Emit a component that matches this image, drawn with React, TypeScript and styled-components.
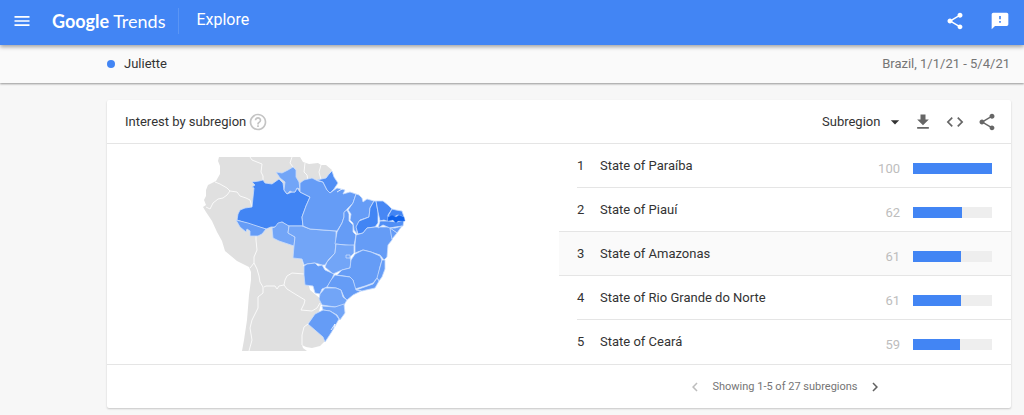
import React from "react";
import styled, { createGlobalStyle } from "styled-components";
import {
  MdArrowDropDown,
  MdChevronLeft,
  MdChevronRight,
  MdCode,
  MdFeedback,
  MdFileDownload,
  MdHelpOutline,
  MdMenu,
  MdShare,
} from "react-icons/md";

const GlobalStyle = createGlobalStyle`
  *, *::before, *::after { box-sizing: border-box; }
  body {
    margin: 0;
    background: #f7f7f7;
    color: #333;
    font-family: Roboto, "Liberation Sans", sans-serif;
    font-size: 13px;
    line-height: 20px;
  }
  button, select { font: inherit; color: inherit; }
`;

const TopBar = styled.header`
  position: relative;
  display: flex;
  align-items: center;
  height: 45px;
  padding: 0 14px 4px 12px;
  background: #4285f4;
  color: #fff;
  box-shadow: 0 2px 4px rgba(0, 0, 0, 0.35);
`;

const IconButton = styled.button<{ $size?: number }>`
  display: flex;
  align-items: center;
  justify-content: center;
  width: 20px;
  height: 20px;
  padding: 0;
  border: 0;
  background: none;
  cursor: pointer;
  svg {
    width: ${(p) => p.$size ?? 20}px;
    height: ${(p) => p.$size ?? 20}px;
    flex: none;
  }
`;

const Logo = styled.a`
  display: flex;
  gap: 4px;
  margin-left: 20px;
  color: #fff;
  font-family: Lato, sans-serif;
  font-size: 18px;
  line-height: 24px;
  text-decoration: none;
`;

const LogoStrong = styled.span`
  font-weight: 700;
`;

const Section = styled.h1`
  margin: 0 auto 0 13px;
  padding: 0 0 2px 17px;
  border-left: 1px solid #5a95f5;
  font-size: 16px;
  font-weight: 400;
  line-height: 24px;
`;

const TopActions = styled.div`
  display: flex;
  gap: 25px;
`;

const TermBar = styled.section`
  display: flex;
  align-items: center;
  justify-content: space-between;
  height: 38px;
  padding: 0 14px 0 107px;
  background: #fafafa;
  box-shadow: 0 1px 2px rgba(0, 0, 0, 0.4);
`;

const Term = styled.span`
  display: flex;
  align-items: center;
  gap: 9px;
  &::before {
    content: "";
    width: 8px;
    height: 8px;
    border-radius: 50%;
    background: #4285f4;
  }
`;

const Period = styled.span`
  color: #757575;
`;

const Card = styled.main`
  margin: 17px 13px 7px 107px;
  border-radius: 2px;
  background: #fff;
  box-shadow: 0 1px 2px rgba(0, 0, 0, 0.2);
`;

const CardHeader = styled.div`
  display: flex;
  align-items: center;
  height: 44px;
  padding: 0 14px 0 18px;
  border-bottom: 1px solid #e5e5e5;
`;

const CardTitle = styled.h2`
  margin: 0 2px 0 0;
  font-size: 13px;
  font-weight: 400;
`;

const HelpButton = styled(IconButton)`
  margin-right: auto;
  color: #c4c4c4;
`;

const SelectWrap = styled.div`
  display: grid;
  align-items: center;
  margin-right: 8px;
  & > * {
    grid-area: 1 / 1;
  }
  svg {
    justify-self: end;
    width: 20px;
    height: 20px;
    pointer-events: none;
  }
`;

const Select = styled.select`
  appearance: none;
  width: 83px;
  padding: 0;
  border: 0;
  background: none;
  outline: none;
`;

const CardActions = styled.div`
  display: flex;
  gap: 12px;
  color: #666;
`;

const CardBody = styled.div`
  display: grid;
  grid-template-columns: 1fr 1fr;
  border-bottom: 1px solid #e5e5e5;
`;

const MapPane = styled.div`
  padding: 11px 0 10px 93px;
`;

const MapDrawing = styled.svg`
  display: block;
  width: 208px;
  height: 199px;
`;

const RegionList = styled.ol`
  margin: 0;
  padding: 0;
  list-style: none;
`;

const RegionRow = styled.li<{ $active?: boolean }>`
  padding-left: ${(p) => (p.$active ? 0 : 18)}px;
  background: ${(p) => (p.$active ? "#fafafa" : "none")};
  box-shadow: ${(p) => (p.$active ? "0 -1px #e5e5e5" : "none")};
  &:not(:last-child) > div {
    border-bottom: 1px solid #e5e5e5;
  }
  & > div {
    padding-left: ${(p) => (p.$active ? 18 : 0)}px;
  }
`;

const RowContent = styled.div`
  display: flex;
  align-items: flex-start;
  height: 44px;
  padding: 12px 19px 0 0;
`;

const Rank = styled.span`
  width: 23px;
`;

const RegionName = styled.span`
  flex: 1;
`;

const Score = styled.span`
  padding-top: 3px;
  color: #bdbdbd;
`;

const Track = styled.span`
  width: 79px;
  height: 11px;
  margin: 7px 0 0 13px;
  background: #eee;
`;

const Fill = styled.span`
  display: block;
  height: 100%;
  background: #4285f4;
`;

const Pager = styled.nav`
  display: flex;
  align-items: center;
  justify-content: center;
  gap: 7px;
  height: 43px;
  margin-left: 50%;
  color: #757575;
  font-size: 11px;
`;

const PageButton = styled(IconButton)`
  color: #616161;
  &:disabled {
    color: #bdbdbd;
  }
`;

const land =
  "219,157 300,157 303,162 309,164 318,163 321,165 326,165 332,170 326,178 318,182 304,190 300,220 302,260 310,290 322,300 318,315 325,341 320,346 312,348 306,347 302,345 303,348 307,351 242,351 244,340 247,320 249,295 251,280 251,272 249,267 237,261 225,251 222,241 217,232 212,221 206,212 203,207 206,205 204,200 206,196 206,190 208,185 212,183 216,181 220,174 220,166 218,161";

const borders = [
  "215,182 220,184 227,188 230,191 237,192 240,196 246,198 250,200 252,207",
  "230,191 227,195 223,198 218,199 213,203 210,209 206,207",
  "250,157 252,160 257,162 262,164 261,172 263,176 263,180",
  "292,157 290,163 293,167",
  "305,163 304,172 307,175 308,181",
  "321,165 319,172 321,180",
  "256,236 256,240 257,250 254,257 254,263 257,269 259,276 260,282 263,287",
  "250,268 254,263",
  "263,287 263,293 258,297 258,308 252,320 250,328 252,340 249,351",
  "264,287 266,286 275,286 277,289 279,286 284,285 285,280 287,276 292,273 304,274",
  "284,285 287,289 295,294 305,300 304,304 301,310 312,311 317,308 320,303",
  "308,324 304,327 302,335 302,345",
  "315,315 308,324",
];

const states = [
  { id: "Amazonas", fill: "#4285f4", points: "252,182 259,181 263,180 265,183 272,184 279,179 283,183 284,190 287,194 292,192 295,192 297,188 300,192 310,197 306,206 302,217 303,226 288,226 282,222 275,227 271,227 266,229 255,226 237,220 238,214 240,210 245,208 252,207 254,188 252,187 255,185" },
  { id: "Acre", fill: "#659cf6", points: "236,220 248,223 266,229 262,234 258,236 250,236 250,231 247,229 246,232 240,227" },
  { id: "Roraima", fill: "#72a5f7", points: "276,172 282,173 288,170 293,167 296,170 296,177 299,182 300,189 297,188 295,192 292,192 290,191 287,194 284,190 285,182 280,178" },
  { id: "Rondônia", fill: "#72a5f7", points: "272,228 275,227 278,223 282,222 289,226 288,233 295,237 294,246 285,243 279,241 273,238" },
  { id: "Mato Grosso", fill: "#72a5f7", points: "289,226 302,226 310,229 336,231 336,242 335,253 329,259 325,265 322,265 315,263 307,264 304,265 302,259 293,258 294,246 295,237 288,233" },
  { id: "Pará", fill: "#659cf6", points: "300,183 304,180 312,178 318,181 323,182 327,190 330,193 337,188 345,190 343,194 350,192 356,194 353,203 348,208 344,213 344,217 342,223 337,231 310,229 303,226 302,217 306,206 310,197 300,192" },
  { id: "Amapá", fill: "#508ef5", points: "317,180 326,178 329,174 332,171 334,177 338,183 334,189 330,193 327,190 323,182" },
  { id: "Maranhão", fill: "#659cf6", points: "356,194 359,195 362,198 363,202 367,199 374,201 370,208 369,217 360,220 357,226 357,234 354,230 353,223 350,220 351,214 348,210 353,203" },
  { id: "Piauí", fill: "#4285f4", points: "374,201 376,201 378,212 378,223 375,227 367,228 363,233 358,234 356,227 359,221 369,217 370,208" },
  { id: "Ceará", fill: "#4787f4", points: "376,201 383,201 388,205 392,209 388,215 388,222 384,220 380,221 378,212" },
  { id: "Tocantins", fill: "#659cf6", points: "347,210 349,214 349,221 353,225 353,232 356,235 354,246 345,245 335,244 337,232 342,223 344,217 344,212" },
  { id: "Bahia", fill: "#659cf6", points: "356,235 363,233 367,228 375,227 380,227 390,227 393,234 392,240 388,245 387,257 384,260 380,255 371,252 363,250 355,253 355,244" },
  { id: "Rio Grande do Norte", fill: "#4285f4", points: "392,209 396,210 402,211 404,217 398,215 394,217 388,216" },
  { id: "Pernambuco", fill: "#508ef5", points: "380,221 388,221 397,222 404,220 403,226 395,227 390,228 383,225 378,228" },
  { id: "Alagoas", fill: "#659cf6", points: "390,228 395,228 402,226 397,233 394,231" },
  { id: "Sergipe", fill: "#659cf6", points: "390,228 397,233 392,239 391,234" },
  { id: "Goiás", fill: "#72a5f7", points: "336,244 345,245 354,245 354,253 350,257 351,263 350,268 342,270 333,274 325,267 327,262 335,253" },
  { id: "Distrito Federal", fill: "#72a5f7", points: "346,255 350,255 350,258 346,258" },
  { id: "Mato Grosso do Sul", fill: "#659cf6", points: "304,266 307,264 315,263 318,266 322,265 325,270 334,274 331,281 327,287 322,289 320,294 315,293 313,286 305,285 304,275" },
  { id: "Minas Gerais", fill: "#659cf6", points: "355,254 363,250 371,252 380,256 382,260 380,267 378,277 373,283 365,286 355,289 353,280 350,277 337,275 342,270 350,268 351,260" },
  { id: "Espírito Santo", fill: "#659cf6", points: "382,260 385,260 385,269 382,277 379,281 377,278 380,267" },
  { id: "Rio de Janeiro", fill: "#659cf6", points: "356,290 373,284 377,278 379,281 375,288 366,290 362,291" },
  { id: "São Paulo", fill: "#659cf6", points: "335,275 350,277 353,280 356,290 361,291 353,295 347,300 344,297 341,290 336,288 327,287 331,280" },
  { id: "Paraná", fill: "#72a5f7", points: "325,288 336,288 341,290 343,297 347,300 344,305 335,307 322,305 319,299 320,294" },
  { id: "Santa Catarina", fill: "#72a5f7", points: "322,306 335,307 344,304 345,313 340,320 337,315 330,311 323,310" },
  { id: "Rio Grande do Sul", fill: "#659cf6", points: "315,314 323,310 330,311 336,315 339,319 334,328 331,333 325,342 323,337 308,324" },
];

const paraiba = "388,217 392,215 396,217 399,215 404,217 405,221 398,221 396,223 393,220 388,221";

function BrazilMap() {
  return (
    <MapDrawing viewBox="200 155 208 199" role="img" aria-label="Map of Brazil by state">
      <polygon points={land} fill="#e0e0e0" />
      {borders.map((points) => (
        <polyline key={points} points={points} fill="none" stroke="#fafafa" strokeWidth="1" strokeLinejoin="round" />
      ))}
      <g stroke="#c8dcfc" strokeWidth="0.8" strokeLinejoin="round">
        {states.map((s) => (
          <polygon key={s.id} points={s.points} fill={s.fill} />
        ))}
      </g>
      <polygon points={paraiba} fill="#1062ea" stroke="#4c8bf5" strokeWidth="0.4" />
      <path d="M331 330L335 324L334 328M337 192L342 189" fill="none" stroke="#fff" strokeWidth="0.8" />
    </MapDrawing>
  );
}

const regions = [
  { name: "State of Paraíba", score: 100 },
  { name: "State of Piauí", score: 62 },
  { name: "State of Amazonas", score: 61, active: true },
  { name: "State of Rio Grande do Norte", score: 61 },
  { name: "State of Ceará", score: 59 },
];

export default function App() {
  return (
    <>
      <GlobalStyle />
      <TopBar>
        <IconButton aria-label="Main menu"><MdMenu /></IconButton>
        <Logo href="#"><LogoStrong>Google</LogoStrong><span>Trends</span></Logo>
        <Section>Explore</Section>
        <TopActions>
          <IconButton aria-label="Share"><MdShare /></IconButton>
          <IconButton aria-label="Send feedback"><MdFeedback /></IconButton>
        </TopActions>
      </TopBar>
      <TermBar>
        <Term>Juliette</Term>
        <Period>Brazil, 1/1/21 - 5/4/21</Period>
      </TermBar>
      <Card>
        <CardHeader>
          <CardTitle>Interest by subregion</CardTitle>
          <HelpButton aria-label="Help"><MdHelpOutline /></HelpButton>
          <SelectWrap>
            <Select aria-label="Resolution" defaultValue="Subregion">
              <option>Subregion</option>
            </Select>
            <MdArrowDropDown />
          </SelectWrap>
          <CardActions>
            <IconButton aria-label="Download"><MdFileDownload /></IconButton>
            <IconButton aria-label="Embed"><MdCode /></IconButton>
            <IconButton aria-label="Share chart"><MdShare /></IconButton>
          </CardActions>
        </CardHeader>
        <CardBody>
          <MapPane><BrazilMap /></MapPane>
          <RegionList>
            {regions.map((r, i) => (
              <RegionRow key={r.name} $active={r.active}>
                <RowContent>
                  <Rank>{i + 1}</Rank>
                  <RegionName>{r.name}</RegionName>
                  <Score>{r.score}</Score>
                  <Track><Fill style={{ width: `${r.score}%` }} /></Track>
                </RowContent>
              </RegionRow>
            ))}
          </RegionList>
        </CardBody>
        <Pager aria-label="Subregion pages">
          <PageButton $size={18} aria-label="Previous" disabled><MdChevronLeft /></PageButton>
          <span>Showing 1-5 of 27 subregions</span>
          <PageButton $size={18} aria-label="Next"><MdChevronRight /></PageButton>
        </Pager>
      </Card>
    </>
  );
}
